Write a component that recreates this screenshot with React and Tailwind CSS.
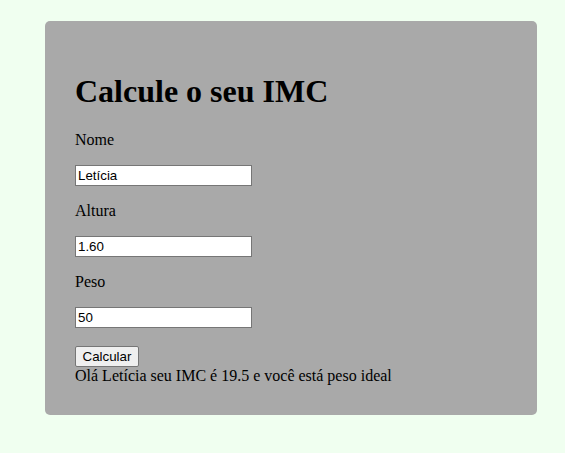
import { useState } from "react";

export default function App() {
  const [nome, setNome] = useState("Letícia");
  const [altura, setAltura] = useState("1.60");
  const [peso, setPeso] = useState("50");

  const inputCls =
    "block w-[177px] h-[21px] border border-[#767676] bg-white px-[2px] text-[13.33px] leading-[15px] text-black font-['Liberation_Sans',Arial,sans-serif] outline-none";

  return (
    <div className="min-h-[453px] bg-[#f0fff0] pt-[21px] font-['Liberation_Serif','Times_New_Roman',serif] text-black">
      <div className="ml-[45px] w-[492px] rounded-[5px] bg-[#a9a9a9] px-[30px] pt-[30px] pb-[30px]">
        <h1 className="my-[21px] text-[32px] font-bold leading-[38px]">Calcule o seu IMC</h1>

        <p className="text-[16px] leading-[18px]">Nome</p>
        <input className={`${inputCls} my-[16px]`} value={nome} onChange={(e) => setNome(e.target.value)} />

        <p className="text-[16px] leading-[18px]">Altura</p>
        <input className={`${inputCls} my-[16px]`} value={altura} onChange={(e) => setAltura(e.target.value)} />

        <p className="text-[16px] leading-[18px]">Peso</p>
        <input className={`${inputCls} mt-[16px]`} value={peso} onChange={(e) => setPeso(e.target.value)} />

        <button className="mt-[18px] block h-[21px] w-[64px] rounded-[2px] border border-[#767676] bg-[#efefef] text-[13.33px] leading-[15px] font-['Liberation_Sans',Arial,sans-serif]">
          Calcular
        </button>
        <p className="text-[16px] leading-[18px]">
          Olá {nome} seu IMC é 19.5 e você está peso ideal
        </p>
      </div>
    </div>
  );
}
